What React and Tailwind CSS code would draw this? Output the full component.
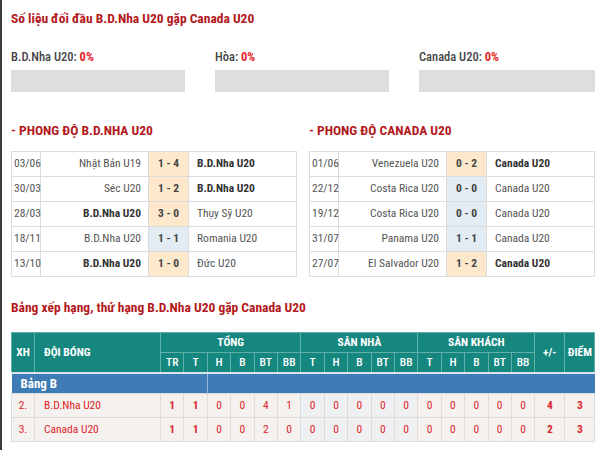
import React from "react";

const FONT = { fontFamily: '"Roboto Condensed", "Liberation Sans Narrow", "Arial Narrow", Roboto, sans-serif' };

const formBDN = [
  { d: "03/06", h: "Nhật Bản U19", s: "1 - 4", a: "B.D.Nha U20", win: "a", draw: false },
  { d: "30/03", h: "Séc U20", s: "1 - 2", a: "B.D.Nha U20", win: "a", draw: false },
  { d: "28/03", h: "B.D.Nha U20", s: "3 - 0", a: "Thụy Sỹ U20", win: "h", draw: false },
  { d: "18/11", h: "B.D.Nha U20", s: "1 - 1", a: "Romania U20", win: null, draw: true },
  { d: "13/10", h: "B.D.Nha U20", s: "1 - 0", a: "Đức U20", win: "h", draw: false },
];

const formCAN = [
  { d: "01/06", h: "Venezuela U20", s: "0 - 2", a: "Canada U20", win: "a", draw: false },
  { d: "22/12", h: "Costa Rica U20", s: "0 - 0", a: "Canada U20", win: null, draw: true },
  { d: "19/12", h: "Costa Rica U20", s: "0 - 0", a: "Canada U20", win: null, draw: true },
  { d: "31/07", h: "Panama U20", s: "1 - 1", a: "Canada U20", win: null, draw: true },
  { d: "27/07", h: "El Salvador U20", s: "1 - 2", a: "Canada U20", win: "a", draw: false },
];

const standings = [
  { pos: "2.", team: "B.D.Nha U20", tong: [1, 1, 0, 0, 4, 1], nha: [0, 0, 0, 0, 0], khach: [0, 0, 0, 0, 0], gd: 4, pts: 3 },
  { pos: "3.", team: "Canada U20", tong: [1, 1, 0, 0, 2, 0], nha: [0, 0, 0, 0, 0], khach: [0, 0, 0, 0, 0], gd: 2, pts: 3 },
];

function FormTable({ rows }) {
  return (
    <table className="w-[285px] table-fixed border-collapse border border-[#d6d6d6] text-[11.5px]">
      <colgroup>
        <col className="w-[29px]" />
        <col className="w-[108px]" />
        <col className="w-[40px]" />
        <col className="w-[108px]" />
      </colgroup>
      <tbody>
        {rows.map((r, i) => (
          <tr key={i} className="h-[25px]">
            <td className="border border-[#dcdcdc] pl-[2px] text-[#555] whitespace-nowrap">{r.d}</td>
            <td className={`border border-[#dcdcdc] pr-[7px] text-right whitespace-nowrap ${r.win === "h" ? "font-bold text-[#333]" : "text-[#555]"}`}>{r.h}</td>
            <td className={`border border-[#dcdcdc] text-center font-bold text-[#444] whitespace-nowrap ${r.draw ? "bg-[#e3ecf2]" : "bg-[#fde8cc]"}`}>{r.s}</td>
            <td className={`border border-[#dcdcdc] pl-[8px] whitespace-nowrap ${r.win === "a" ? "font-bold text-[#333]" : "text-[#555]"}`}>{r.a}</td>
          </tr>
        ))}
      </tbody>
    </table>
  );
}

function Stat({ label }) {
  return (
    <div>
      <div className="h-[16px] leading-[16px] text-[12.5px] font-medium text-[#444]">
        {label}: <span className="font-bold text-[#e8262b]">0%</span>
      </div>
      <div className="mt-[5px] h-[22px] bg-[#dedede]"></div>
    </div>
  );
}

export default function App() {
  const sub = ["T", "H", "B", "BT", "BB"];
  return (
    <div style={FONT} className="w-[600px] h-[450px] overflow-hidden bg-white border-l-[2px] border-[#3a3a3a] pl-[9px] pr-[5px]">
      <h1 className="mt-[10px] h-[16px] leading-[16px] text-[13.5px] font-bold text-[#b3191c] whitespace-nowrap">
        Số liệu đối đầu B.D.Nha U20 gặp Canada U20
      </h1>

      <div className="mt-[23px] grid grid-cols-[174px_174px_176px] gap-x-[30px]">
        <Stat label="B.D.Nha U20" />
        <Stat label="Hòa" />
        <Stat label="Canada U20" />
      </div>

      <div className="mt-[30px] grid grid-cols-[285px_284px] gap-x-[13px]">
        <div>
          <h2 className="h-[16px] leading-[16px] text-[13.5px] font-bold text-[#b3191c] whitespace-nowrap">- PHONG ĐỘ B.D.NHA U20</h2>
          <div className="mt-[13px]"><FormTable rows={formBDN} /></div>
        </div>
        <div>
          <h2 className="h-[16px] leading-[16px] text-[13.5px] font-bold text-[#b3191c] whitespace-nowrap">- PHONG ĐỘ CANADA U20</h2>
          <div className="mt-[13px]"><FormTable rows={formCAN} /></div>
        </div>
      </div>

      <h2 className="mt-[22px] h-[16px] leading-[16px] text-[13.5px] font-bold text-[#b3191c] whitespace-nowrap">
        Bảng xếp hạng, thứ hạng B.D.Nha U20 gặp Canada U20
      </h2>

      <table className="mt-[17px] w-[584px] table-fixed border-collapse text-[11.5px]">
        <colgroup>
          <col className="w-[23px]" />
          <col className="w-[126px]" />
          {Array.from({ length: 16 }).map((_, i) => (
            <col key={i} className="w-[23.4px]" />
          ))}
          <col className="w-[30px]" />
          <col className="w-[30px]" />
        </colgroup>
        <thead className="bg-[#16877f] text-white font-bold">
          <tr className="h-[20px]">
            <th rowSpan={2} className="border border-[#5fb0a9] text-center">XH</th>
            <th rowSpan={2} className="border border-[#5fb0a9] text-left pl-[9px]">ĐỘI BÓNG</th>
            <th colSpan={6} className="border border-[#5fb0a9]">TỔNG</th>
            <th colSpan={5} className="border border-[#5fb0a9]">SÂN NHÀ</th>
            <th colSpan={5} className="border border-[#5fb0a9]">SÂN KHÁCH</th>
            <th rowSpan={2} className="border border-[#5fb0a9]">+/-</th>
            <th rowSpan={2} className="border border-[#5fb0a9]">ĐIỂM</th>
          </tr>
          <tr className="h-[20px]">
            {["TR", ...sub, ...sub, ...sub].map((s, i) => (
              <th key={i} className="border border-[#5fb0a9] font-medium">{s}</th>
            ))}
          </tr>
        </thead>
        <tbody>
          <tr className="h-[21px] bg-[#3f7bb5] text-white font-bold border-t-[2px] border-t-[#d8e4ee]">
            <td colSpan={4} className="pl-[9px] border-r border-[#9ab8d6] text-[13px]">Bảng B</td>
            <td colSpan={16}></td>
          </tr>
          {standings.map((r, i) => (
            <tr key={i} className="h-[24px] bg-[#f4f1ee] text-[#e0252a]">
              <td className="border border-[#dcdcdc] text-center">{r.pos}</td>
              <td className="border border-[#dcdcdc] pl-[9px] whitespace-nowrap">{r.team}</td>
              {r.tong.map((v, j) => (
                <td key={"t" + j} className={`border border-[#dcdcdc] text-center ${j < 2 ? "font-bold" : ""}`}>{v}</td>
              ))}
              {r.nha.map((v, j) => (
                <td key={"n" + j} className="border border-[#dcdcdc] text-center bg-[#eff0f2]">{v}</td>
              ))}
              {r.khach.map((v, j) => (
                <td key={"k" + j} className="border border-[#dcdcdc] text-center">{v}</td>
              ))}
              <td className="border border-[#dcdcdc] text-center font-bold">{r.gd}</td>
              <td className="border border-[#dcdcdc] text-center font-bold">{r.pts}</td>
            </tr>
          ))}
        </tbody>
      </table>
    </div>
  );
}
